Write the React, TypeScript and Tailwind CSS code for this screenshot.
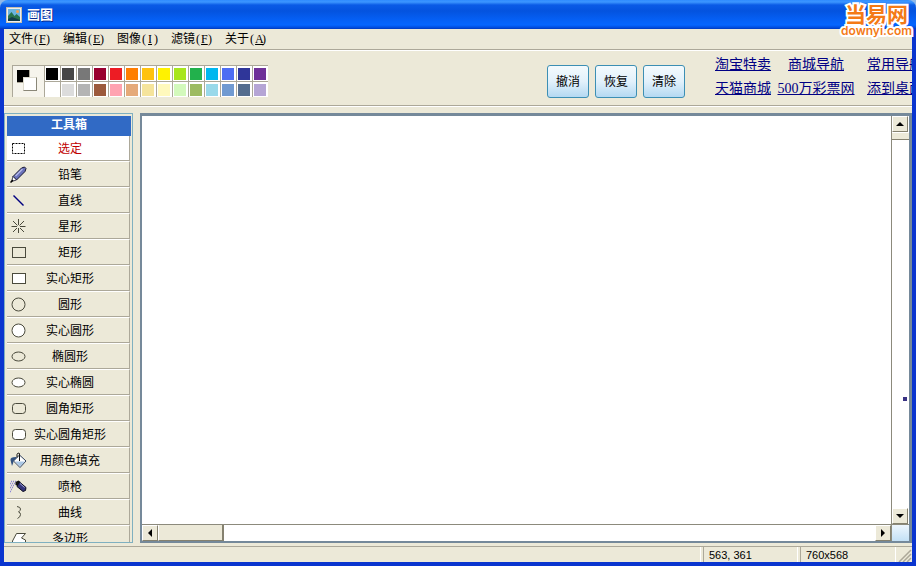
import { useState, type ReactNode } from 'react'
import clsx from 'clsx'

const menus = [
  { label: '文件', accessKey: 'F' },
  { label: '编辑', accessKey: 'E' },
  { label: '图像', accessKey: 'I' },
  { label: '滤镜', accessKey: 'F' },
  { label: '关于', accessKey: 'A' },
]

const palette = [
  'bg-black', 'bg-[#464646]', 'bg-[#787878]', 'bg-[#990030]', 'bg-[#ed1c24]', 'bg-[#ff7e00]', 'bg-[#ffc20e]',
  'bg-[#fff200]', 'bg-[#a8e61d]', 'bg-[#22b14c]', 'bg-[#00b7ef]', 'bg-[#4d6df3]', 'bg-[#2f3699]', 'bg-[#6f3198]',
  'bg-white', 'bg-[#dcdcdc]', 'bg-[#b4b4b4]', 'bg-[#9c5a3c]', 'bg-[#ffa3b1]', 'bg-[#e5aa7a]', 'bg-[#f5e49c]',
  'bg-[#fff9bd]', 'bg-[#d3f9bc]', 'bg-[#9dbb61]', 'bg-[#99d9ea]', 'bg-[#709ad1]', 'bg-[#546d8e]', 'bg-[#b5a5d5]',
]

const line = { fill: 'none', stroke: '#4a4a3c' }
const solid = { fill: '#fff', stroke: '#4a4a3c' }

const tools: { name: string; icon: ReactNode }[] = [
  {
    name: '选定',
    icon: <rect x="2.5" y="3.5" width="12" height="10" fill="none" stroke="#000" strokeDasharray="2 1" />,
  },
  {
    name: '铅笔',
    icon: (
      <>
        <path d="M3 10.5L11.5 2l3-1 1.500 1.500-1 3L6.500 14z" fill="#6a72ba" stroke="#15152e" />
        <path d="M1.500 15.500L3 10.500 6.500 14z" fill="#fff" stroke="#15152e" strokeWidth=".8" />
        <path d="M5.500 10L12.500 3" stroke="#b4b9ea" strokeWidth="1.500" />
        <path d="M.5 16.500L3 14" stroke="#000" strokeWidth="1.500" />
      </>
    ),
  },
  { name: '直线', icon: <path d="M3.500 3.500l10 10" stroke="#000080" strokeWidth="1.400" /> },
  {
    name: '星形',
    icon: <path d="M8.500 1v6M8.500 10v5M1.500 8.500h5.500M10 8.500h5.500M3 3l4.500 4.500M10 10l4 4M14 3L9.500 7.500M7 10l-4 4" {...line} />,
  },
  { name: '矩形', icon: <rect x="2.500" y="3.500" width="13" height="10" {...line} /> },
  { name: '实心矩形', icon: <rect x="2.500" y="3.500" width="13" height="10" {...solid} /> },
  { name: '圆形', icon: <circle cx="8.500" cy="8.500" r="6.500" {...line} /> },
  { name: '实心圆形', icon: <circle cx="8.500" cy="8.500" r="6.500" {...solid} /> },
  { name: '椭圆形', icon: <ellipse cx="8.500" cy="8.500" rx="6.500" ry="4.500" {...line} /> },
  { name: '实心椭圆', icon: <ellipse cx="8.500" cy="8.500" rx="6.500" ry="4.500" {...solid} /> },
  { name: '圆角矩形', icon: <rect x="2.500" y="3.500" width="13" height="10" rx="3" {...line} /> },
  { name: '实心圆角矩形', icon: <rect x="2.500" y="3.500" width="13" height="10" rx="3" {...solid} /> },
  {
    name: '用颜色填充',
    icon: (
      <>
        <path d="M9.500 3l6.500 6-6 6.500L3.500 9z" fill="#fff" stroke="#2b3c58" />
        <path d="M5 9.500h10l-5 5z" fill="#a9c6e4" />
        <path d="M9.500 9V1.500q-1.500-1.500-2.500 1v3" fill="none" stroke="#111" />
        <path d="M6 5Q0 5 .5 8l1.500 6q1.500-3 1.500-5l3-3z" fill="#31517f" />
      </>
    ),
  },
  {
    name: '喷枪',
    icon: (
      <>
        <path d="M1 3.500h6M0 5.500h6M1 7.500h4M0 9.500h3M1 11.500h2M0 13.500h2" stroke="#8c86d6" strokeWidth="1.500" strokeDasharray="1 1" />
        <path d="M5.500 4l3-1.500 2 1.500-3 4-2-1z" fill="#111" />
        <path d="M9.500 4l6.500 5.500-.5 3-2.500 1-6-5z" fill="#34347a" stroke="#0c0c20" />
        <path d="M10 5.500l4.500 4" stroke="#a3a7dd" />
      </>
    ),
  },
  { name: '曲线', icon: <path d="M7 2.500q3.500.5 3.500 2.500 0 1.500-2 3 2 .5 2 2.500 0 2.500-3 4" {...line} /> },
  { name: '多边形', icon: <path d="M6.500 3.500h9l-4 4.500 4 2v5H2.500v-4z" {...solid} /> },
]

const linkColumns = [
  ['淘宝特卖', '天猫商城'],
  ['商城导航', '500万彩票网'],
  ['常用导航', '添到桌面'],
]

function TitleBar() {
  return (
    <header className="flex h-[29px] shrink-0 items-center gap-[5px] rounded-t-lg bg-[linear-gradient(#2f8cff_0px,#3c96ff_2px,#0a5be6_5px,#0453df_11px,#0560f5_20px,#0566ff_25px,#0048d8_28px,#0038b8_29px)] px-[6px] pt-px">
      <svg width="16" height="16" viewBox="0 0 16 16" aria-hidden="true">
        <rect x=".5" y=".5" width="15" height="15" fill="#eee" stroke="#c6c0ae" />
        <rect x="2" y="2" width="12" height="12" fill="#6cb4e0" />
        <circle cx="11.500" cy="4.500" r="1.500" fill="#f4a04c" />
        <path d="M2 9l3.500-4 3 4 2-2 3.500 3v4H2z" fill="#28724c" />
        <path d="M2 12l4-2 8 3v1H2z" fill="#143c4c" />
      </svg>
      <h1 className="text-[13px] font-bold text-white [text-shadow:1px_1px_#0a2a8c]">画图</h1>
    </header>
  )
}

function SiteLogo() {
  return (
    <div className="absolute top-1 right-1 flex flex-col items-center text-[#f47a16] [paint-order:stroke] [-webkit-text-stroke:4px_#fff]">
      <span className="text-[21px] leading-[21px] font-bold">当易网</span>
      <span className="font-['Inter',sans-serif] text-[12px] leading-[12px] font-semibold">downyi.com</span>
    </div>
  )
}

function MenuBar() {
  return (
    <nav className="flex h-[21px] shrink-0 items-center gap-3 border-b border-[#aca899] pl-[5px] shadow-[0_1px_#fff]">
      {menus.map((menu) => (
        <button key={menu.label} className="flex items-center">
          {menu.label}
          <span className="grid w-[18px] grid-cols-3 text-center font-['Liberation_Serif',serif]">
            <span>(</span>
            <u>{menu.accessKey}</u>
            <span>)</span>
          </span>
        </button>
      ))}
    </nav>
  )
}

function Palette({ color, onPick }: { color: string; onPick: (color: string) => void }) {
  return (
    <div className="flex shrink-0">
      <div className="h-8 w-8 border-t border-l border-[#aca899] bg-[#f6f4ec] pt-1 pl-1">
        <div className="grid">
          <div className={clsx('col-start-1 row-start-1 h-[13px] w-[13px] border-r border-b border-[#aca899]', color)} />
          <div className="col-start-1 row-start-1 mt-[7px] ml-[6px] h-[14px] w-[14px] border border-[#dedbcd] border-r-[#8a8778] border-b-[#8a8778] bg-white" />
        </div>
      </div>
      <div className="grid grid-cols-14">
        {palette.map((swatch) => (
          <button
            key={swatch}
            aria-label={swatch}
            onClick={() => onPick(swatch)}
            className="h-4 w-4 border-t border-l border-[#aca899] bg-white p-px"
          >
            <span className={clsx('block h-3 w-3', swatch)} />
          </button>
        ))}
      </div>
    </div>
  )
}

function ToolBar() {
  const [color, setColor] = useState('bg-black')

  return (
    <div className="flex h-[56px] shrink-0 items-start overflow-hidden border-b border-[#aca899] pl-2 shadow-[0_1px_#fff]">
      <div className="flex flex-1 pt-[15px]">
        <Palette color={color} onPick={setColor} />
      </div>
      <div className="flex gap-[6px] pt-[15px]">
        {['撤消', '恢复', '清除'].map((action) => (
          <button
            key={action}
            className="h-[33px] w-[42px] rounded-[3px] border border-[#3c8fb4] bg-linear-to-b from-[#f4fafd] via-[#e2f1fb] to-[#b4d9f2]"
          >
            {action}
          </button>
        ))}
      </div>
      <div className="flex w-[227px] shrink-0 pt-[3px] pl-[30px] text-[14px] leading-6 whitespace-nowrap text-[#000084] underline">
        {linkColumns.map((column) => (
          <div key={column[0]} className="flex w-[56px] shrink-0 flex-col items-center not-first:ml-[17px] last:ml-[23px]">
            {column.map((label) => (
              <a key={label} href="#" className="font-['Liberation_Serif','Noto_Sans_CJK_SC',serif]">
                {label}
              </a>
            ))}
          </div>
        ))}
      </div>
    </div>
  )
}

function ToolBox() {
  const [active, setActive] = useState('选定')

  return (
    <aside className="flex w-[129px] shrink-0 flex-col overflow-hidden border border-[#7fb0c0] p-[2px] pb-0 pr-px">
      <h2 className="h-5 shrink-0 bg-[#316ac5] text-center leading-[18px] font-bold text-white">工具箱</h2>
      <div className="flex min-h-0 flex-1 flex-col overflow-hidden pr-px">
        {tools.map((tool) => (
          <button
            key={tool.name}
            onClick={() => setActive(tool.name)}
            className={clsx(
              'grid shrink-0 grid-cols-1 items-center border-r border-b border-[#aca899] first:h-[25px]',
              tool.name === active ? 'bg-white text-[#c00000]' : 'h-[26px] border-t border-t-white',
            )}
          >
            <svg width="17" height="17" viewBox="0 0 17 17" className="col-start-1 row-start-1 ml-[3px]" aria-hidden="true">
              {tool.icon}
            </svg>
            <span className="col-start-1 row-start-1 pt-[2px] pl-1 text-center">{tool.name}</span>
          </button>
        ))}
      </div>
    </aside>
  )
}

function ScrollButton({ label, d }: { label: string; d: string }) {
  return (
    <button
      aria-label={label}
      className="flex h-4 w-4 shrink-0 items-center justify-center border border-t-white border-r-[#85816f] border-b-[#85816f] border-l-white bg-[#ece9d8]"
    >
      <svg width="8" height="8" viewBox="0 0 8 8" aria-hidden="true">
        <path d={d} />
      </svg>
    </button>
  )
}

function Canvas() {
  return (
    <main className="grid min-w-0 flex-1 grid-cols-[1fr_18px] grid-rows-[1fr_17px] border-2 border-t-[3px] border-r-[3px] border-[#75899a] bg-white">
      <div />
      <div className="flex flex-col border-l border-[#8c8a7c]">
        <ScrollButton label="向上" d="M0 6l4-4 4 4z" />
        <div className="h-2 border-t border-b border-t-white border-b-[#85816f] bg-[#ece9d8]" />
        <div className="flex flex-1 items-end justify-center pb-[107px]">
          <span className="ml-2 h-1 w-1 bg-[#3a3384]" />
        </div>
        <ScrollButton label="向下" d="M0 2l4 4 4-4z" />
      </div>
      <div className="flex border-t border-[#8c8a7c]">
        <ScrollButton label="向左" d="M6 0l-4 4 4 4z" />
        <div className="w-[66px] border-r-2 border-b border-l border-r-[#85816f] border-b-[#85816f] border-l-white bg-[#ece9d8]" />
        <div className="flex-1" />
        <ScrollButton label="向右" d="M2 0l4 4-4 4z" />
      </div>
      <div className="border-t border-l border-[#8c8a7c] bg-linear-to-b from-[#edf6fd] to-[#c3e0f5]" />
    </main>
  )
}

function StatusBar() {
  return (
    <footer className="flex h-[16px] shrink-0 gap-[2px] border-t border-[#aca899] font-['Liberation_Sans',sans-serif] text-[11px] leading-[17px]">
      <div className="flex-1 border-r border-white" />
      <div className="w-[95px] border-r border-l border-r-white border-l-[#aca899] pl-[5px]">563, 361</div>
      <div className="w-[96px] border-r border-l border-r-white border-l-[#aca899] pl-[5px]">760x568</div>
      <svg width="14" height="15" viewBox="0 0 14 15" aria-hidden="true">
        <path d="M1 15L13 3M5 15l8-8M9 15l4-4" stroke="#aca899" strokeWidth="1.500" />
      </svg>
    </footer>
  )
}

export default function App() {
  return (
    <div className="relative flex h-screen flex-col overflow-hidden bg-[#8fb8e8] font-['Liberation_Sans','Noto_Sans_CJK_SC',sans-serif] text-[12px] leading-4 text-black">
      <TitleBar />
      <div className="flex min-h-0 flex-1 flex-col border-4 border-t-0 border-[#0a35cf] bg-[#ece9d8]">
        <MenuBar />
        <ToolBar />
        <div className="flex min-h-0 flex-1 gap-[7px] pt-[7px] pb-[3px]">
          <ToolBox />
          <Canvas />
        </div>
        <StatusBar />
      </div>
      <SiteLogo />
    </div>
  )
}
